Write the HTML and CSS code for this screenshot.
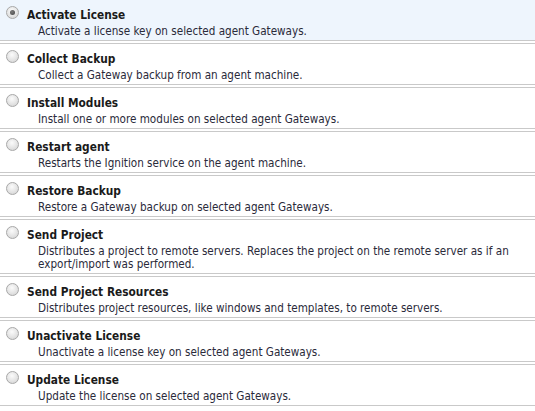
FILE: index.html
```html
<!DOCTYPE html>
<html>
<head>
<meta charset="utf-8">
<link rel="stylesheet" href="styles.css">
</head>
<body>
<div class="list">
  <label class="row selected">
    <span class="radio checked"></span>
    <span class="body">
      <span class="title">Activate License</span>
      <span class="desc">Activate a license key on selected agent Gateways.</span>
    </span>
  </label>
  <label class="row">
    <span class="radio"></span>
    <span class="body">
      <span class="title">Collect Backup</span>
      <span class="desc">Collect a Gateway backup from an agent machine.</span>
    </span>
  </label>
  <label class="row">
    <span class="radio"></span>
    <span class="body">
      <span class="title">Install Modules</span>
      <span class="desc">Install one or more modules on selected agent Gateways.</span>
    </span>
  </label>
  <label class="row">
    <span class="radio"></span>
    <span class="body">
      <span class="title">Restart agent</span>
      <span class="desc">Restarts the Ignition service on the agent machine.</span>
    </span>
  </label>
  <label class="row">
    <span class="radio"></span>
    <span class="body">
      <span class="title">Restore Backup</span>
      <span class="desc">Restore a Gateway backup on selected agent Gateways.</span>
    </span>
  </label>
  <label class="row">
    <span class="radio"></span>
    <span class="body">
      <span class="title">Send Project</span>
      <span class="desc">Distributes a project to remote servers. Replaces the project on the remote server as if an export/import was performed.</span>
    </span>
  </label>
  <label class="row">
    <span class="radio"></span>
    <span class="body">
      <span class="title">Send Project Resources</span>
      <span class="desc">Distributes project resources, like windows and templates, to remote servers.</span>
    </span>
  </label>
  <label class="row">
    <span class="radio"></span>
    <span class="body">
      <span class="title">Unactivate License</span>
      <span class="desc">Unactivate a license key on selected agent Gateways.</span>
    </span>
  </label>
  <label class="row">
    <span class="radio"></span>
    <span class="body">
      <span class="title">Update License</span>
      <span class="desc">Update the license on selected agent Gateways.</span>
    </span>
  </label>
</div>
</body>
</html>
```
FILE: styles.css
```css
html, body {
  margin: 0;
  padding: 0;
  background: #ffffff;
}
body {
  font-family: "DejaVu Sans Condensed", "DejaVu Sans", sans-serif;
  font-size: 11.7px;
  color: #222;
}
.list {
  display: flex;
  flex-direction: column;
  gap: 2px;
}
.row {
  display: flex;
  align-items: flex-start;
  padding: 7px 4px 2px 6px;
  border-top: 1px solid #c9c9c9;
  border-bottom: 1px solid #c9c9c9;
  cursor: pointer;
}
.row:first-child {
  border-top: none;
}
.row.selected {
  background: #eef5fd;
}
.radio {
  flex: none;
  width: 11px;
  height: 11px;
  margin-top: -1px;
  border-radius: 50%;
  border: 1px solid #a8a8a8;
  background: radial-gradient(circle at 45% 35%, #fbfbfb 0%, #e4e4e4 55%, #cfcfcf 100%);
  position: relative;
}
.radio.checked::after {
  content: "";
  position: absolute;
  left: 3px;
  top: 3px;
  width: 5px;
  height: 5px;
  border-radius: 50%;
  background: radial-gradient(circle at 40% 35%, #7a7a7a 0%, #444 100%);
}
.body {
  display: flex;
  flex-direction: column;
  margin-left: 8px;
}
.title {
  font-weight: bold;
  font-size: 11.8px;
  line-height: 16px;
  color: #1a1a1a;
}
.desc {
  margin-top: 2px;
  padding-left: 11px;
  line-height: 13px;
  font-size: 11.6px;
  color: #2a2a3a;
}
```
